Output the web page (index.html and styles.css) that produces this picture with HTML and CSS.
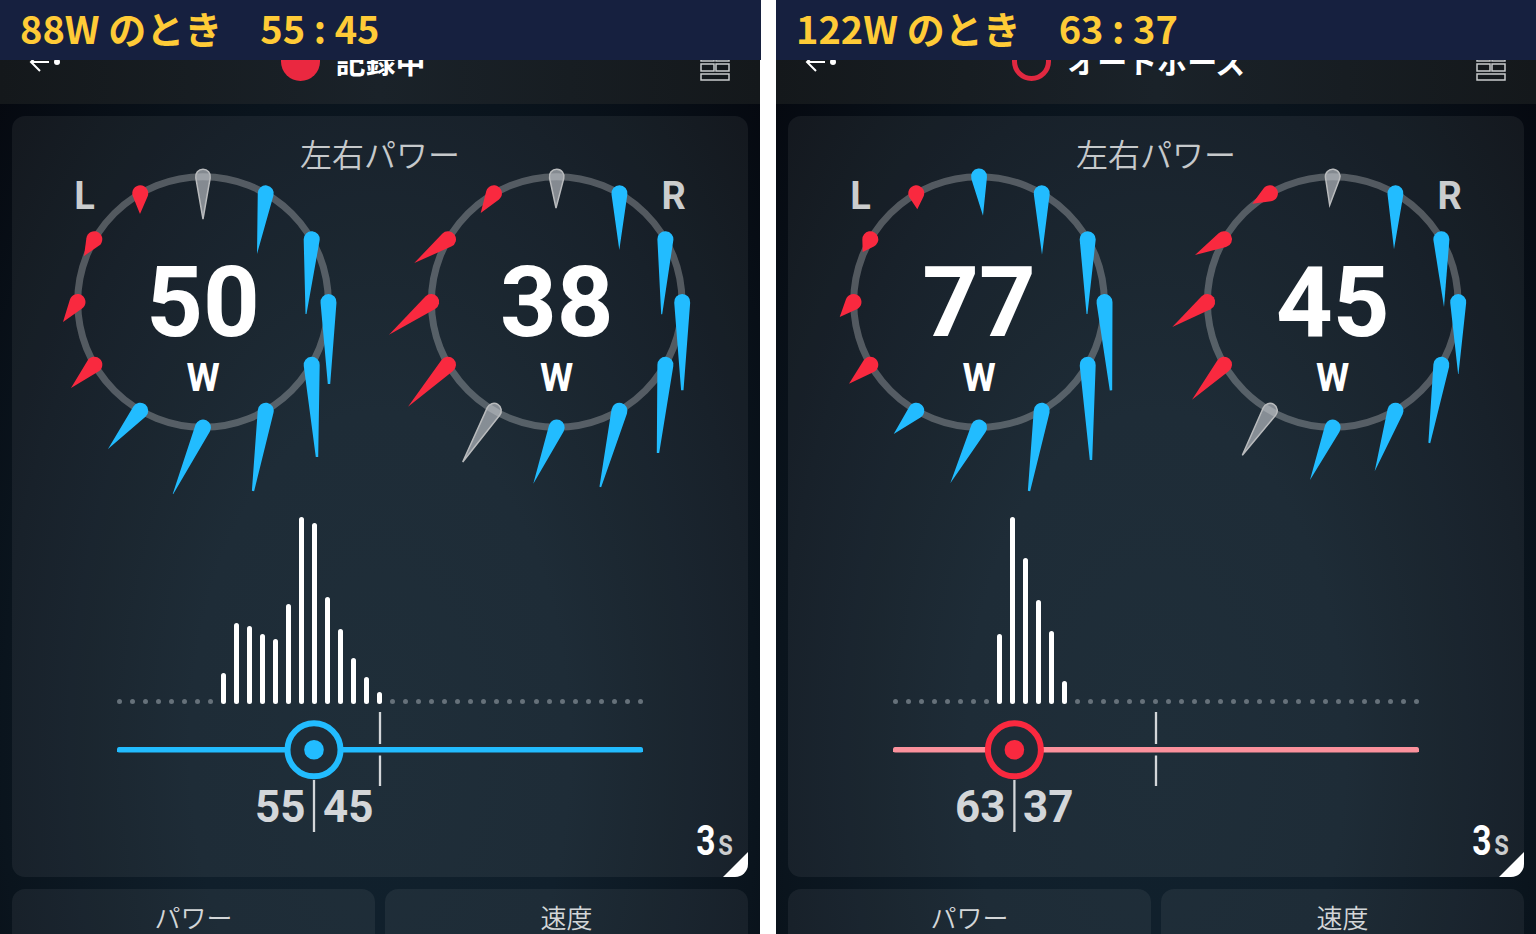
FILE: index.html
```html
<!DOCTYPE html>
<html lang="ja">

<head>
  <meta charset="UTF-8">
  <meta name="viewport" content="width=device-width, initial-scale=1.0">
  <title>左右パワー</title>
  <link rel="stylesheet" href="styles.css">
</head>

<body>
  <section class="screen">
    <h1 class="banner">88W のとき　55 : 45</h1>
    <div class="topbar">
      <svg class="back" width="34" height="24" viewBox="0 0 34 24">
        <path d="M20 12H2M11 3L2 12l9 9" />
        <circle cx="28" cy="12" r="3" />
      </svg>
      <div class="status">
        <span class="rec"></span>
        <span>記録中</span>
      </div>
      <svg class="grid" width="30" height="38" viewBox="0 0 30 38">
        <path d="M1 1h28v7H1zM1 11h13v7H1zM16 11h13v7H16zM1 21h13v7H1zM16 21h13v7H16zM1 31h28v6H1z" />
      </svg>
    </div>
    <div class="content">
      <div class="card power">
        <h2>左右パワー</h2>
        <div class="dials">
          <svg class="dial" data-dial="left50" viewBox="-191 -134 368 340"></svg>
          <svg class="dial" data-dial="right38" viewBox="-176.7 -134 368 340"></svg>
        </div>
        <div class="histogram" data-start="8" data-bars="30.7,80.7,77.7,69.7,65,100,187,180.7,107.4,74.7,46,27.4,12"></div>
        <svg class="balance blue" width="526" height="136" viewBox="0 0 526 136">
          <path class="tick" d="M263 8v32M263 51.500v30.500" />
          <path class="track" d="M2.500 45.800h521" />
          <path class="tick" d="M197 76v52" />
          <circle class="knob" cx="197" cy="45.800" r="26.500" />
          <circle class="dot" cx="197" cy="45.800" r="9.800" />
          <text x="188.500" y="117.500" text-anchor="end">55</text>
          <text x="206" y="117.500">45</text>
        </svg>
        <div class="average"><b>3</b><span>s</span></div>
        <div class="corner"></div>
      </div>
      <div class="row">
        <div class="card small">パワー</div>
        <div class="card small">速度</div>
      </div>
    </div>
  </section>

  <section class="screen">
    <h1 class="banner">122W のとき　63 : 37</h1>
    <div class="topbar">
      <svg class="back" width="34" height="24" viewBox="0 0 34 24">
        <path d="M20 12H2M11 3L2 12l9 9" />
        <circle cx="28" cy="12" r="3" />
      </svg>
      <div class="status">
        <span class="rec paused"></span>
        <span>オートポーズ</span>
      </div>
      <svg class="grid" width="30" height="38" viewBox="0 0 30 38">
        <path d="M1 1h28v7H1zM1 11h13v7H1zM16 11h13v7H16zM1 21h13v7H1zM16 21h13v7H16zM1 31h28v6H1z" />
      </svg>
    </div>
    <div class="content">
      <div class="card power">
        <h2>左右パワー</h2>
        <div class="dials">
          <svg class="dial" data-dial="left77" viewBox="-191 -134 368 340"></svg>
          <svg class="dial" data-dial="right45" viewBox="-176.7 -134 368 340"></svg>
        </div>
        <div class="histogram" data-start="8" data-bars="69.7,187,146,103.7,73,23"></div>
        <svg class="balance red" width="526" height="136" viewBox="0 0 526 136">
          <path class="tick" d="M263 8v32M263 51.500v30.500" />
          <path class="track" d="M2.500 45.800h521" />
          <path class="tick" d="M121.400 76v52" />
          <circle class="knob" cx="121.400" cy="45.800" r="26.500" />
          <circle class="dot" cx="121.400" cy="45.800" r="9.800" />
          <text x="112.500" y="117.500" text-anchor="end">63</text>
          <text x="130" y="117.500">37</text>
        </svg>
        <div class="average"><b>3</b><span>s</span></div>
        <div class="corner"></div>
      </div>
      <div class="row">
        <div class="card small">パワー</div>
        <div class="card small">速度</div>
      </div>
    </div>
  </section>

  <script src="script.js"></script>
</body>

</html>
```
FILE: styles.css
```css
body {
  margin: 0;
  background: #fff;
  color: #fff;
  font-family: Roboto, 'Noto Sans CJK JP', sans-serif;
  display: flex;
  gap: 16px;
  height: 934px;
  overflow: hidden;
}

.screen {
  width: 760px;
  height: 934px;
  box-sizing: border-box;
  display: flex;
  flex-direction: column;
  background: radial-gradient(ellipse 540px 960px at 50% 80%, #11212d 0%, #101f2b 35%, #0a141d 70%, #05080f 100%);
}

.banner {
  margin: 0 -1px 0 0;
  height: 60px;
  flex-shrink: 0;
  line-height: 56px;
  padding-left: 20px;
  box-sizing: border-box;
  background: #16203f;
  color: #ffcb37;
  font-family: 'Noto Sans CJK JP', sans-serif;
  font-size: 38px;
  font-weight: bold;
  white-space: pre;
}

.topbar {
  height: 44px;
  flex-shrink: 0;
  overflow: hidden;
  display: flex;
  justify-content: space-between;
  align-items: flex-start;
  padding: 0 30px 0 29px;
  background: linear-gradient(90deg, #14181b, #1a2229 50%, #14181b);
}

.back {
  margin-top: -10px;
  fill: none;
  stroke: #fff;
  stroke-width: 2;
}

.back circle {
  fill: #fff;
  stroke: none;
}

.status {
  display: flex;
  align-items: flex-start;
  gap: 16px;
  height: 40px;
  margin-top: -18px;
  margin-right: 57px;
  font-size: 30px;
  font-weight: bold;
  line-height: 42px;
}

.rec {
  width: 39px;
  height: 39px;
  border-radius: 50%;
  box-sizing: border-box;
  background: #ea2840;
}

.rec.paused {
  background: none;
  border: 5px solid #e02840;
}

.grid {
  margin-top: -17px;
  fill: none;
  stroke: #c9cccd;
  stroke-width: 1.500;
}

.content {
  flex: 1;
  min-height: 0;
  overflow: hidden;
  display: flex;
  flex-direction: column;
  gap: 12px;
  padding: 12px 12px 0;
}

.card {
  background: rgba(255, 255, 255, 0.06);
  border-radius: 13px;
}

.power {
  position: relative;
  height: 761px;
  flex-shrink: 0;
  overflow: hidden;
  display: flex;
  flex-direction: column;
  align-items: center;
}

.power h2 {
  margin: 0;
  height: 52px;
  line-height: 81px;
  font-size: 32px;
  font-weight: 350;
  color: #c6c9cb;
}

.dials {
  display: flex;
  height: 340px;
}

.dial {
  width: 368px;
  height: 340px;
  overflow: visible;
}

.ring {
  fill: none;
  stroke: rgba(255, 255, 255, 0.26);
  stroke-width: 7;
}

.needle.blue {
  fill: #22bcff;
}

.needle.red {
  fill: #f9293f;
}

.needle.gray {
  fill: rgba(205, 208, 214, 0.6);
  stroke: #b9bbbd;
  stroke-width: 1.500;
}

.dial text {
  fill: #fff;
  font-weight: bold;
  font-size: 38px;
  text-anchor: middle;
}

.dial .watts {
  font-size: 99px;
}

.dial .side {
  fill: #cbcdce;
}

.histogram {
  width: 526px;
  height: 196px;
  display: flex;
  justify-content: space-between;
  align-items: flex-end;
}

.histogram span {
  width: 5px;
  border-radius: 3px;
  background: #fff;
}

.histogram .empty {
  height: 5px;
  background: #66717a;
}

.balance .tick {
  stroke: #d3d6d9;
  stroke-width: 2.300;
}

.balance .track {
  stroke-width: 5.500;
  stroke-linecap: round;
}

.balance .knob {
  fill: #1f2c37;
  stroke-width: 6;
}

.balance text {
  fill: #d3d6d9;
  font-size: 44px;
  font-weight: bold;
}

.blue .track,
.blue .knob {
  stroke: #22bcff;
}

.blue .dot {
  fill: #22bcff;
}

.red .track {
  stroke: #fb919c;
}

.red .knob {
  stroke: #f9293f;
}

.red .dot {
  fill: #f9293f;
}

.average {
  position: absolute;
  right: 15px;
  bottom: 9px;
  line-height: 50px;
  display: flex;
  align-items: baseline;
  gap: 3px;
  transform: scaleX(0.8);
  transform-origin: right;
}

.average b {
  font-size: 42px;
}

.average span {
  font-size: 37px;
  font-weight: 500;
  color: #cbcdce;
}

.corner {
  position: absolute;
  right: 0;
  bottom: 0;
  width: 25px;
  height: 25px;
  background: #fff;
  clip-path: polygon(100% 0, 100% 100%, 0 100%);
}

.row {
  display: flex;
  gap: 10px;
}

.small {
  flex: 1;
  height: 90px;
  line-height: 61px;
  text-align: center;
  font-size: 26px;
  font-weight: 350;
  color: #d3d6d8;
}
```
FILE: script.js
```js
// tips are relative to the dial centre, clockwise from 12 o'clock
var dials = {
  left50: {
    watts: 50, side: 'L', sideX: -118.5,
    colors: 'gray blue blue blue blue blue blue blue red red red red',
    tips: [[0, -83], [54, -48], [103, 12], [126, 82], [114, 155], [50, 189], [-30, 192], [-95, 147], [-132, 86], [-140, 20], [-119, -46], [-63, -88]]
  },
  right38: {
    watts: 38, side: 'R', sideX: 117,
    colors: 'gray blue blue blue blue blue blue gray red red red red',
    tips: [[-0.7, -94], [62.6, -52], [105, 12.3], [125.6, 88.3], [101.3, 151], [43.6, 185], [-23.4, 181.7], [-94, 160], [-148.7, 104.7], [-167.7, 32.7], [-142.4, -39], [-76, -89]]
  },
  left77: {
    watts: 77, side: 'L', sideX: -118.5,
    colors: 'blue blue blue blue blue blue blue blue red red red red',
    tips: [[4, -86.3], [63, -47.3], [108, 12], [132, 88.3], [112, 158], [50, 189], [-28.7, 181.3], [-85.3, 132], [-130, 81.7], [-139.3, 15], [-116.3, -50], [-61.7, -92.7]]
  },
  right45: {
    watts: 45, side: 'R', sideX: 117,
    colors: 'gray blue blue blue blue blue blue gray red red red red',
    tips: [[-3, -97], [61.3, -52.7], [111.3, 5], [125.6, 72], [96.6, 141], [42, 169.3], [-22.7, 178], [-90.4, 153.3], [-140.7, 97.7], [-160.4, 25], [-137.7, -47], [-80.4, -98.3]]
  }
};

function needle(i, tip, color) {
  var a = i * Math.PI / 6;
  var x = 125.5 * Math.sin(a);
  var y = -125.5 * Math.cos(a);
  var r = color === 'gray' ? 7.3 : 8;
  var len = Math.hypot(tip[0] - x, tip[1] - y);
  var dir = Math.atan2(tip[1] - y, tip[0] - x);
  var t = Math.acos(r / len);
  // long needles end in a flat tip
  var w = Math.max(0, Math.min(1.2, (len - 70) / 10));
  var px = -Math.sin(dir) * w;
  var py = Math.cos(dir) * w;
  var d = 'M' + (x + r * Math.cos(dir + t)) + ' ' + (y + r * Math.sin(dir + t)) +
    'A' + r + ' ' + r + ' 0 1 1 ' + (x + r * Math.cos(dir - t)) + ' ' + (y + r * Math.sin(dir - t)) +
    'L' + (tip[0] - px) + ' ' + (tip[1] - py) +
    'L' + (tip[0] + px) + ' ' + (tip[1] + py) + 'Z';
  return '<path class="needle ' + color + '" d="' + d + '"/>';
}

document.querySelectorAll('.dial').forEach(function (svg) {
  var dial = dials[svg.dataset.dial];
  var colors = dial.colors.split(' ');
  var html = '<circle class="ring" r="125.3"/>';
  dial.tips.forEach(function (tip, i) {
    html += needle(i, tip, colors[i]);
  });
  html += '<text class="side" x="' + dial.sideX + '" y="-93.500">' + dial.side + '</text>';
  html += '<text class="watts" y="34">' + dial.watts + '</text>';
  html += '<text y="88.500">W</text>';
  svg.innerHTML = html;
});

document.querySelectorAll('.histogram').forEach(function (box) {
  var start = Number(box.dataset.start);
  var bars = box.dataset.bars.split(',');
  var html = '';
  for (var i = 0; i < 41; i++) {
    var h = bars[i - start];
    html += h ? '<span style="height:' + h + 'px"></span>' : '<span class="empty"></span>';
  }
  box.innerHTML = html;
});
```
